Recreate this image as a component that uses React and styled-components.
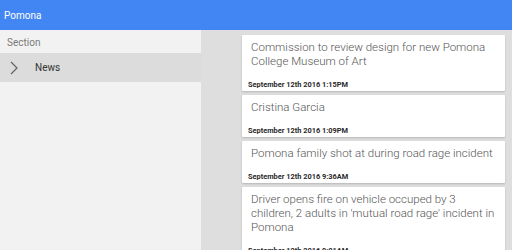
import React from "react";
import styled, { createGlobalStyle } from "styled-components";

const Global = createGlobalStyle`
  html, body { margin: 0; padding: 0; }
  body { font-family: Roboto, "Noto Sans", sans-serif; }
  #root { width: 512px; height: 250px; overflow: hidden; }
`;

const Page = styled.div`
  display: flex;
  flex-direction: column;
  width: 512px;
  height: 250px;
  overflow: hidden;
`;

const TopBar = styled.header`
  height: 30px;
  flex: none;
  background: #4286f4;
  display: flex;
  align-items: center;
  padding-left: 4px;
  color: #fff;
  font-size: 10px;
`;

const Body = styled.div`
  flex: 1;
  display: flex;
  min-height: 0;
`;

const Sidebar = styled.nav`
  width: 201px;
  flex: none;
  background: #f2f2f2;
  padding-top: 1px;
`;

const SectionLabel = styled.div`
  height: 22px;
  display: flex;
  align-items: center;
  padding-left: 7px;
  color: #7a7a7a;
  font-size: 10px;
`;

const NavItem = styled.div`
  height: 29px;
  display: flex;
  align-items: center;
  background: ${p => (p.$active ? "#dcdcdc" : "transparent")};
  color: #333;
  font-size: 10px;
`;

const Chevron = styled.svg`
  width: 8px;
  height: 14px;
  margin-left: 10px;
  margin-right: 17px;
`;

const Main = styled.main`
  flex: 1;
  background: #dedede;
  padding: 5px 7px 0 41px;
  display: flex;
  flex-direction: column;
  gap: 4px;
  overflow: hidden;
`;

const Card = styled.article`
  flex: none;
  background: #fff;
  border-radius: 1px;
  box-shadow: 0 1px 2px rgba(0, 0, 0, 0.18);
  padding: 5px 7px 2px 6px;
`;

const Title = styled.div`
  font-size: 11.5px;
  line-height: 14px;
  font-weight: 300;
  color: #555;
  padding-left: 3px;
`;

const DateLine = styled.div`
  margin-top: 12px;
  font-size: 7.4px;
  line-height: 9px;
  font-weight: 700;
  color: #2a2a2a;
  white-space: nowrap;
`;

const items = [
  {
    title: "Commission to review design for new Pomona College Museum of Art",
    date: "September 12th 2016 1:15PM",
  },
  { title: "Cristina Garcia", date: "September 12th 2016 1:09PM" },
  {
    title: "Pomona family shot at during road rage incident",
    date: "September 12th 2016 9:36AM",
  },
  {
    title:
      "Driver opens fire on vehicle occuped by 3 children, 2 adults in 'mutual road rage' incident in Pomona",
    date: "September 12th 2016 9:01AM",
  },
];

export default function App() {
  return (
    <Page>
      <Global />
      <TopBar>Pomona</TopBar>
      <Body>
        <Sidebar>
          <SectionLabel>Section</SectionLabel>
          <NavItem $active>
            <Chevron viewBox="0 0 8 14">
              <path d="M1 1 L7 7 L1 13" fill="none" stroke="#666" strokeWidth="1.3" />
            </Chevron>
            News
          </NavItem>
        </Sidebar>
        <Main>
          {items.map((it, i) => (
            <Card key={i}>
              <Title>{it.title}</Title>
              <DateLine>{it.date}</DateLine>
            </Card>
          ))}
        </Main>
      </Body>
    </Page>
  );
}
